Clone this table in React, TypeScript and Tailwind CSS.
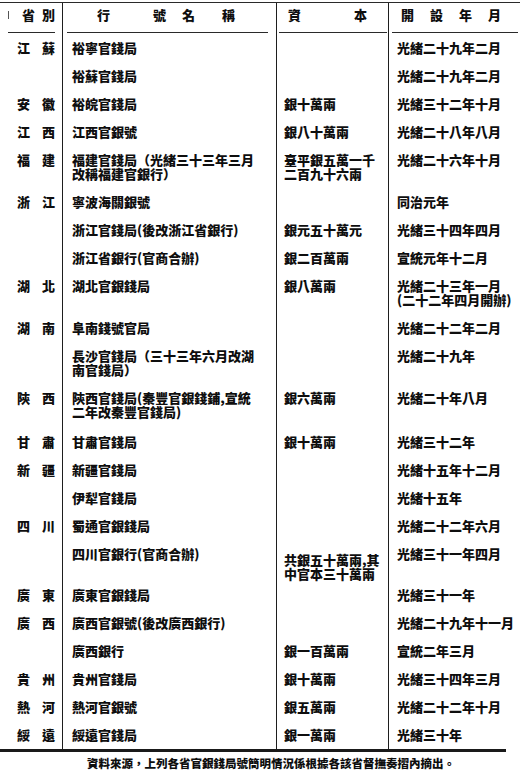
type Row = {
  prov?: [string, string];
  name: string[];
  cap?: string[];
  date: string[];
  tall?: boolean; // extra slack under a wrapped row
  capLow?: boolean; // capital sits a half line lower in the scan
};

const ROWS: Row[] = [
  { prov: ['江', '蘇'], name: ['裕寧官錢局'], date: ['光緒二十九年二月'] },
  { name: ['裕蘇官錢局'], date: ['光緒二十九年二月'] },
  { prov: ['安', '徽'], name: ['裕皖官錢局'], cap: ['銀十萬兩'], date: ['光緒三十二年十月'] },
  { prov: ['江', '西'], name: ['江西官銀號'], cap: ['銀八十萬兩'], date: ['光緒二十八年八月'] },
  {
    prov: ['福', '建'],
    name: ['福建官錢局（光緒三十三年三月', '改稱福建官銀行）'],
    cap: ['臺平銀五萬一千', '二百九十六兩'],
    date: ['光緒二十六年十月'],
  },
  { prov: ['浙', '江'], name: ['寧波海關銀號'], date: ['同治元年'] },
  { name: ['浙江官錢局(後改浙江省銀行)'], cap: ['銀元五十萬元'], date: ['光緒三十四年四月'] },
  { name: ['浙江省銀行(官商合辦)'], cap: ['銀二百萬兩'], date: ['宣統元年十二月'] },
  {
    prov: ['湖', '北'],
    name: ['湖北官銀錢局'],
    cap: ['銀八萬兩'],
    date: ['光緒二十三年一月', '(二十二年四月開辦)'],
  },
  { prov: ['湖', '南'], name: ['阜南錢號官局'], date: ['光緒二十二年二月'] },
  { name: ['長沙官錢局（三十三年六月改湖', '南官錢局）'], date: ['光緒二十九年'] },
  {
    prov: ['陝', '西'],
    name: ['陝西官錢局(秦豐官銀錢鋪,宣統', '二年改秦豐官錢局)'],
    cap: ['銀六萬兩'],
    date: ['光緒二十年八月'],
    tall: true,
  },
  { prov: ['甘', '肅'], name: ['甘肅官錢局'], cap: ['銀十萬兩'], date: ['光緒三十二年'] },
  { prov: ['新', '疆'], name: ['新疆官錢局'], date: ['光緒十五年十二月'] },
  { name: ['伊犁官錢局'], date: ['光緒十五年'] },
  { prov: ['四', '川'], name: ['蜀通官銀錢局'], date: ['光緒二十二年六月'] },
  {
    name: ['四川官銀行(官商合辦)'],
    cap: ['共銀五十萬兩,其', '中官本三十萬兩'],
    date: ['光緒三十一年四月'],
    capLow: true,
  },
  { prov: ['廣', '東'], name: ['廣東官銀錢局'], date: ['光緒三十一年'] },
  { prov: ['廣', '西'], name: ['廣西官銀號(後改廣西銀行)'], date: ['光緒二十九年十一月'] },
  { name: ['廣西銀行'], cap: ['銀一百萬兩'], date: ['宣統二年三月'] },
  { prov: ['貴', '州'], name: ['貴州官錢局'], cap: ['銀十萬兩'], date: ['光緒三十四年三月'] },
  { prov: ['熱', '河'], name: ['熱河官銀號'], cap: ['銀五萬兩'], date: ['光緒二十二年十月'] },
  { prov: ['綏', '遠'], name: ['綏遠官錢局'], cap: ['銀一萬兩'], date: ['光緒三十年'] },
];

function Lines({ lines }: { lines?: string[] }) {
  if (!lines) return null;
  return (
    <>
      {lines.map((l, i) => (
        <div key={i} className="whitespace-nowrap">{l}</div>
      ))}
    </>
  );
}

const vline = 'border-l-[1.5px] border-[#1e1e1e]';

export default function App() {
  return (
    <div
      className="h-[776px] w-[520px] overflow-hidden bg-white pt-[2px] font-black text-[#0e0e0e]"
      style={{ fontFamily: '"Noto Sans CJK TC", "Noto Sans CJK SC", sans-serif' }}
    >
      {/* table */}
      <div className="w-[520px] border-t border-[#2a2a2a]">
        <div className="grid grid-cols-[62px_214px_112px_132px] text-[13px] leading-[14px]">
          {/* header */}
          <div className="h-[31px]">
            <div className="ml-[8px] mr-[7px] flex h-[30px] items-center border-b border-[#2a2a2a] pb-[6px]">
              <span className="mr-[13px] h-[8px] w-px bg-[#555]" />
              <span>省</span>
              <span className="ml-[7px]">別</span>
            </div>
          </div>
          <div className={`h-[31px] ${vline}`}>
            <div className="ml-[4px] mr-[8px] flex h-[30px] items-center border-b border-[#2a2a2a] pb-[6px]">
              <span className="ml-[30px]">行</span>
              <span className="ml-[43px]">號</span>
              <span className="ml-[16px]">名</span>
              <span className="ml-[27px]">稱</span>
            </div>
          </div>
          <div className={`h-[31px] ${vline}`}>
            <div className="ml-[2px] mr-[1px] flex h-[30px] items-center border-b border-[#2a2a2a] pb-[6px]">
              <span className="ml-[9px]">資</span>
              <span className="ml-[53px]">本</span>
            </div>
          </div>
          <div className={`h-[31px] ${vline}`}>
            <div className="ml-[3px] mr-[2px] flex h-[30px] items-center gap-[16px] border-b border-[#2a2a2a] pb-[6px] pl-[9px]">
              <span>開</span>
              <span>設</span>
              <span>年</span>
              <span>月</span>
            </div>
          </div>

          {ROWS.map((r, i) => {
            const pad = r.tall ? 'pt-[7px] pb-[9px]' : 'pt-[7px] pb-[7px]';
            return (
              <div key={i} className="contents">
                <div className={`flex gap-[12px] pl-[17px] ${pad}`}>
                  {r.prov && (
                    <>
                      <span>{r.prov[0]}</span>
                      <span>{r.prov[1]}</span>
                    </>
                  )}
                </div>
                <div className={`${vline} pl-[9px] ${pad}`}>
                  <Lines lines={r.name} />
                </div>
                <div className={`${vline} pl-[7px] ${r.capLow ? 'pt-[13px] pb-0' : pad}`}>
                  <Lines lines={r.cap} />
                </div>
                <div className={`${vline} pl-[8px] ${pad}`}>
                  <Lines lines={r.date} />
                </div>
              </div>
            );
          })}
        </div>
        <div className="h-[3px] w-[506px] bg-[#1a1a1a]" />
      </div>

      {/* source note */}
      <p className="mt-[5px] whitespace-nowrap pl-[87px] text-[11.5px] leading-[13px]">
        資料來源，上列各省官銀錢局號簡明情況係根據各該省督撫奏摺內摘出。
      </p>
    </div>
  );
}
